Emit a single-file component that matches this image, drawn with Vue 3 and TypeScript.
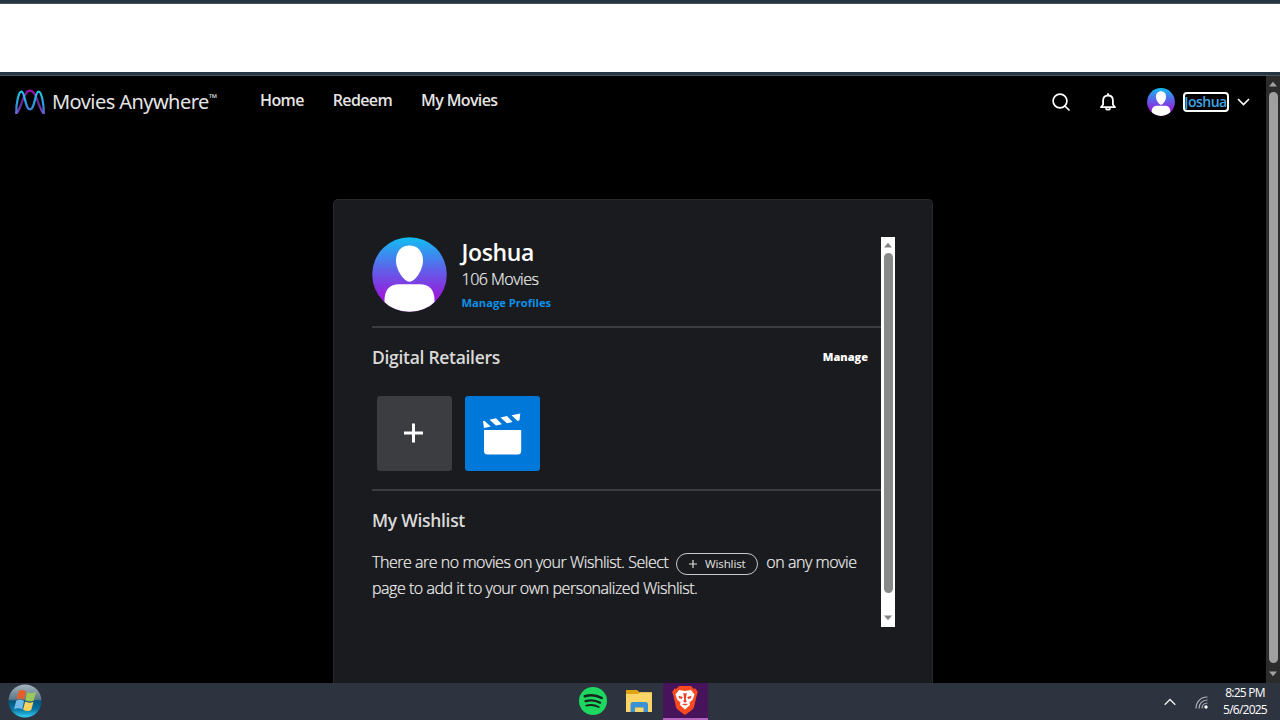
<script setup lang="ts">
import { ref } from 'vue';

type NavItem = {
    label: string,
    className: string
};

const navItems: NavItem[] = [
    { label: 'Home', className: 'nav-home' },
    { label: 'Redeem', className: 'nav-redeem' },
    { label: 'My Movies', className: 'nav-movies' }
];

const profile = ref({
    name: 'Joshua',
    movies: 106
});
</script>

<template>
    <div class="desktop">
        <div class="window-edge"></div>
        <div class="browser-bar"></div>
        <div class="window-edge"></div>
        <div class="viewport">
            <div class="page">
                <header class="header">
                    <div class="brand">
                        <svg class="brand-mark" width="32" height="27" viewBox="0 0 32 27" fill="none">
                            <defs>
                                <linearGradient id="markCyan" x1="0" y1="0" x2="0" y2="27" gradientUnits="userSpaceOnUse">
                                    <stop offset="0.1" stop-color="#25c8ef" />
                                    <stop offset="0.55" stop-color="#239ddb" />
                                    <stop offset="1" stop-color="#7a55cf" />
                                </linearGradient>
                                <linearGradient id="markPurple" x1="0" y1="0" x2="0" y2="27" gradientUnits="userSpaceOnUse">
                                    <stop offset="0" stop-color="#a00fae" />
                                    <stop offset="0.5" stop-color="#6b2394" />
                                    <stop offset="1" stop-color="#7a58d2" />
                                </linearGradient>
                            </defs>
                            <path d="M2.200 24.500C5.500 21.500 7 15 9.500 9C11.500 4 13 1.700 16 1.700S20.500 4 22.500 9C25 15 26.500 21.500 29.800 24.500" stroke="url(#markPurple)" stroke-width="2.200" />
                            <path d="M2.200 25C2 15 4.500 2.500 7.500 2.500C11 2.500 11 20.300 16 20.300S21 2.500 24.500 2.500C27.500 2.500 30 15 29.800 25" stroke="url(#markCyan)" stroke-width="2.200" />
                        </svg>
                        <span class="brand-name">Movies Anywhere</span>
                        <span class="brand-tm">™</span>
                    </div>
                    <nav class="nav">
                        <a v-for="item in navItems" :key="item.label" :class="item.className">{{ item.label }}</a>
                    </nav>
                    <div class="tools">
                        <svg class="search" width="20" height="20" viewBox="0 0 20 20" fill="none" stroke="#fff" stroke-width="1.700">
                            <circle cx="9" cy="9" r="6.900" />
                            <path d="M13.900 14L18 18" stroke-linecap="round" />
                        </svg>
                        <svg class="bell" width="16" height="20" viewBox="0 0 16 20" fill="none" stroke="#fff" stroke-width="1.800">
                            <path d="M1 15.200H15L12.900 12.500V8.500C12.900 5.200 11 3.500 8 3.500S3.100 5.200 3.100 8.500V12.500Z" stroke-linejoin="round" />
                            <path d="M8 3.200V1.200" />
                            <path d="M5.800 16.200C6.200 18.200 9.800 18.200 10.200 16.200" />
                        </svg>
                        <svg class="avatar" width="28" height="28" viewBox="0 0 75 75">
                            <use href="#avatarArt" />
                        </svg>
                        <span class="user-name">{{ profile.name }}</span>
                        <svg width="13" height="8" viewBox="0 0 13 8" fill="none" stroke="#fff" stroke-width="1.600">
                            <path d="M1 1L6.500 6.500L12 1" />
                        </svg>
                    </div>
                </header>
                <main class="card">
                    <div class="scroller">
                        <div class="content">
                            <section class="profile">
                                <svg width="75" height="75" viewBox="0 0 75 75">
                                    <defs>
                                        <linearGradient id="avatarBg" x1="0" y1="0" x2="0" y2="1">
                                            <stop offset="0" stop-color="#10bff3" />
                                            <stop offset="0.45" stop-color="#615ee9" />
                                            <stop offset="0.8" stop-color="#9a1bdc" />
                                        </linearGradient>
                                        <clipPath id="avatarClip">
                                            <circle cx="37.500" cy="37.500" r="37.300" />
                                        </clipPath>
                                    </defs>
                                    <g id="avatarArt" clip-path="url(#avatarClip)">
                                        <rect width="75" height="75" fill="url(#avatarBg)" />
                                        <path d="M37.500 8.500C45.500 8.500 51 14.500 51 23.500C51 33 43 44.700 37.500 44.700S24 33 24 23.500C24 14.500 29.500 8.500 37.500 8.500Z" fill="#fff" />
                                        <path d="M12.500 75V63C12.500 53 18 47.300 27 47.300H48C57 47.300 62.500 53 62.500 63V75Z" fill="#fff" />
                                    </g>
                                </svg>
                                <div class="profile-info">
                                    <h1>{{ profile.name }}</h1>
                                    <p>{{ profile.movies }} Movies</p>
                                    <a>Manage Profiles</a>
                                </div>
                            </section>
                            <section class="retailers">
                                <div class="section-head">
                                    <h2>Digital Retailers</h2>
                                    <a class="manage">Manage</a>
                                </div>
                                <div class="tiles">
                                    <div class="tile">
                                        <svg width="20" height="20" viewBox="0 0 20 20" stroke="#fff" stroke-width="3">
                                            <path d="M9.500 0.500V19.500M0 10H19" />
                                        </svg>
                                    </div>
                                    <div class="tile tile-blue">
                                        <svg width="75" height="75" viewBox="0 0 75 75" fill="#fff">
                                            <path d="M19 34H56.200V55Q56.200 58.500 52.700 58.500H22.500Q19 58.500 19 55Z" />
                                            <path d="M18 25.300L19.300 24.700L25.800 30.500L19 32ZM24.500 23.800L31 22.300L37 28.200L31 29.500ZM35.500 21.500L42 20L47.500 26L42 27.200ZM46.500 19.200L55.300 17.600L54.500 24.300L52.500 24.900Z" />
                                        </svg>
                                    </div>
                                </div>
                            </section>
                            <section class="wishlist">
                                <h2 class="wishlist-title">My Wishlist</h2>
                                <p>
                                    <span class="line-start">There are no movies on your Wishlist. Select</span>
                                    <span class="pill">
                                        <svg width="8" height="8" viewBox="0 0 8 8" stroke="#ddd" stroke-width="1.200">
                                            <path d="M4 0V8M0 4H8" />
                                        </svg>
                                        <span>Wishlist</span>
                                    </span>
                                    <span class="line-end">on any movie</span>
                                </p>
                                <p class="line-two">page to add it to your own personalized Wishlist.</p>
                            </section>
                        </div>
                        <div class="scrollbar">
                            <svg width="10" height="6" viewBox="0 0 10 6"><path d="M1 5.500L5 0.800L9 5.500Z" /></svg>
                            <div class="thumb"></div>
                            <svg width="10" height="6" viewBox="0 0 10 6"><path d="M1 0.500L5 5.200L9 0.500Z" /></svg>
                        </div>
                    </div>
                </main>
            </div>
            <div class="scrollbar page-scrollbar">
                <svg width="10" height="6" viewBox="0 0 10 6"><path d="M1 5.500L5 0.800L9 5.500Z" /></svg>
                <div class="thumb"></div>
                <svg width="10" height="6" viewBox="0 0 10 6"><path d="M1 0.500L5 5.200L9 0.500Z" /></svg>
            </div>
        </div>
        <footer class="taskbar">
            <svg class="start" width="34" height="34" viewBox="0 0 34 34">
                <defs>
                    <linearGradient id="orb" x1="0" y1="0" x2="0" y2="1">
                        <stop offset="0" stop-color="#a6b5bf" />
                        <stop offset="0.450" stop-color="#587888" />
                        <stop offset="0.500" stop-color="#05547d" />
                        <stop offset="0.750" stop-color="#0875a5" />
                        <stop offset="1" stop-color="#35d2f3" />
                    </linearGradient>
                </defs>
                <circle cx="17" cy="17" r="16.500" fill="url(#orb)" />
                <path d="M10.500 7.200C13 5.300 15.500 5.800 18 7.300L16.200 15.700C13.500 14.200 11 14.200 8.500 15.500Z" fill="#e3602c" />
                <path d="M19.200 7.900C22 9.500 24.500 9.500 28 8L25.800 16.500C23 18 20 17.500 17.400 16.200Z" fill="#9bc858" />
                <path d="M8.200 16.800C11 15.300 13.500 15.500 16 17L14.300 25.300C11.500 23.800 9 23.800 6 25.200Z" fill="#72bcea" />
                <path d="M17.100 17.500C20 19 22.500 19 25.500 17.700L23.200 26.100C20.500 27.500 18 27.200 15.100 25.800Z" fill="#f9d15b" />
            </svg>
            <div class="apps">
                <div class="app">
                    <svg width="28" height="28" viewBox="0 0 28 28" fill="none" stroke="#17251d" stroke-linecap="round">
                        <circle cx="14" cy="14" r="14" fill="#1ed760" stroke="none" />
                        <path d="M5.800 9.200C11.500 7.600 18 8.200 22.700 11" stroke-width="2.600" />
                        <path d="M6.500 14.100C11.500 12.700 17 13.300 21.200 15.700" stroke-width="2.200" />
                        <path d="M7.200 18.600C11.500 17.500 16 18 19.700 20" stroke-width="1.800" />
                    </svg>
                </div>
                <div class="app">
                    <svg width="28" height="24" viewBox="0 0 28 24">
                        <path d="M1 1H12L15 3.500H27V10H1Z" fill="#dfa315" />
                        <path d="M1 5H13L15.500 3.200H27V23H1Z" fill="#fbd568" />
                        <path d="M5.500 23V15.500Q5.500 13 8 13H20.500Q23 13 23 15.500V23H18.500V18.500H10V23Z" fill="#3a91d4" />
                    </svg>
                </div>
                <div class="app app-active">
                    <svg width="26" height="30" viewBox="0 0 26 30">
                        <path d="M7 1H19L21.500 3.800L23.500 3.500L25.800 7L24.800 10L22 22Q21.500 24 19.500 25.300L13 30L6.500 25.300Q4.500 24 4 22L1.200 10L0.200 7L2.500 3.500L4.500 3.800Z" fill="#fb4a20" />
                        <path d="M7 5L13 6L19 5L22.500 9.500L20.800 14.500L17.500 17.500L18 20L13 24.500L8 20L8.500 17.500L5.200 14.500L3.500 9.500Z" fill="#fff" />
                        <path d="M6.500 10.800L10.800 12L9.800 14L7.200 13.200ZM19.500 10.800L15.200 12L16.200 14L18.800 13.200ZM11.200 8L13 8.600L14.800 8L13.800 14L14.600 16.500L13 17.800L11.400 16.500L12.200 14ZM9.500 19L13 18.700L16.500 19L13 20.600Z" fill="#e93d25" />
                    </svg>
                </div>
            </div>
            <div class="tray">
                <svg width="12" height="8" viewBox="0 0 12 8" fill="none" stroke="#eee" stroke-width="1.400">
                    <path d="M0.700 6.700L6 1.500L11.300 6.700" />
                </svg>
                <svg class="wifi" width="13" height="13" viewBox="0 0 13 13" fill="none" stroke="#aeb2b9" stroke-width="1.200">
                    <path d="M1 12.500C1 6 5.500 1 12.500 1" />
                    <path d="M4 12.500C4 7.500 7.500 4 12.500 4" />
                    <path d="M7 12.500C7 9.500 9 7 12.500 7" />
                    <circle cx="11" cy="11" r="1.700" fill="#fff" stroke="none" />
                </svg>
                <div class="clock">
                    <span class="time">8:25 PM</span>
                    <span class="date">5/6/2025</span>
                </div>
            </div>
        </footer>
    </div>
</template>

<style>
body{
    margin: 0;
    overflow: hidden;
}
</style>

<style scoped>
.desktop{
    width: 1280px;
    height: 720px;
    display: flex;
    flex-direction: column;
    background: #000;
    font-family: "Open Sans", "Noto Sans", sans-serif;
    color: #e4e4e4;
    overflow: hidden;
}
.desktop *{
    box-sizing: border-box;
}
svg{
    display: block;
    flex: none;
}
h1, h2, p{
    margin: 0;
}
span, a{
    white-space: nowrap;
}
.window-edge{
    height: 4px;
    flex: none;
    background: #263541;
    border-bottom: 1px solid #45545d;
}
.browser-bar{
    height: 68px;
    flex: none;
    background: #fff;
}
.viewport{
    height: 607px;
    flex: none;
    display: flex;
}
.page{
    width: 1266px;
    display: flex;
    flex-direction: column;
    align-items: center;
    overflow: hidden;
}
.header{
    width: 100%;
    height: 52px;
    flex: none;
    padding: 0 16px 0 14px;
    display: flex;
    align-items: center;
}
.brand{
    width: 246px;
    display: flex;
    align-items: center;
}
.brand-mark{
    margin-right: 6px;
}
.brand-name{
    font-family: "Noto Sans", sans-serif;
    font-size: 20px;
    line-height: 28px;
    letter-spacing: -0.56px;
}
.brand-tm{
    font-size: 11px;
    line-height: 20px;
    align-self: flex-start;
}
.nav{
    display: flex;
    gap: 29px;
    font-size: 16px;
    font-weight: 600;
    line-height: 24px;
    letter-spacing: -0.63px;
    margin-top: -4px;
}
.tools{
    margin-left: auto;
    display: flex;
    align-items: center;
}
.search{
    margin-right: 29px;
}
.bell{
    margin-right: 31px;
}
.avatar{
    margin-right: 8px;
}
.user-name{
    width: 46px;
    height: 20px;
    margin-right: 8.5px;
    border: 2px solid #fff;
    border-radius: 4px;
    color: #43a4e4;
    font-size: 14px;
    font-weight: 600;
    line-height: 16px;
    letter-spacing: -0.5px;
    display: flex;
    justify-content: center;
    overflow: hidden;
}
.card{
    width: 600px;
    flex: 1;
    margin-top: 71px;
    padding: 37px 37px 0 38px;
    border: 1px solid #27292c;
    border-bottom: none;
    border-radius: 5px 5px 0 0;
    background: #1a1b1e;
}
.scroller{
    height: 390px;
    display: flex;
}
.content{
    width: 509px;
}
.profile{
    height: 91px;
    display: flex;
    gap: 14.5px;
    border-bottom: 2px solid #3c3d40;
}
.profile-info h1{
    color: #fff;
    font-size: 23px;
    font-weight: 600;
    line-height: 30px;
    letter-spacing: -0.35px;
}
.profile-info p{
    color: #f0f0f0;
    font-size: 16px;
    font-weight: 300;
    line-height: 24px;
    letter-spacing: -0.5px;
    -webkit-text-stroke: 0.2px #f0f0f0;
}
.profile-info a{
    display: block;
    color: #0e91e8;
    font-size: 11.2px;
    font-weight: 700;
    line-height: 23px;
}
.retailers{
    height: 163px;
    padding-top: 16px;
    border-bottom: 2px solid #3c3d40;
}
.section-head{
    height: 25px;
    padding-right: 13px;
    display: flex;
    align-items: center;
    justify-content: space-between;
}
h2{
    color: #dadada;
    font-size: 17.5px;
    font-weight: 600;
    line-height: 26px;
    letter-spacing: -0.3px;
}
.manage{
    color: #fff;
    font-size: 11px;
    font-weight: 800;
}
.tiles{
    display: flex;
    gap: 13px;
    padding: 26.5px 0 0 4.7px;
}
.tile{
    width: 75px;
    height: 75px;
    border-radius: 3px;
    display: flex;
    align-items: center;
    justify-content: center;
    background: #3c3d40;
}
.tile-blue{
    background: #0078da;
}
.wishlist{
    padding-top: 16px;
}
.wishlist p{
    height: 26px;
    display: flex;
    align-items: center;
    color: #f0f0f0;
    font-size: 16px;
    line-height: 26px;
    font-weight: 300;
    letter-spacing: -0.46px;
    white-space: nowrap;
    -webkit-text-stroke: 0.2px #f0f0f0;
}
.wishlist-title{
    margin-bottom: 16px;
}
.pill{
    width: 82px;
    height: 22px;
    flex: none;
    margin: 3px 8px 0;
    border: 1px solid #c8c8c8;
    border-radius: 11px;
    display: flex;
    align-items: center;
    justify-content: center;
    gap: 8px;
    color: #e4e4e4;
    font-size: 11.5px;
    font-weight: 400;
    line-height: 20px;
    letter-spacing: -0.1px;
    -webkit-text-stroke: 0;
}
.scrollbar{
    width: 14px;
    display: flex;
    flex-direction: column;
    align-items: center;
    gap: 5px;
    padding: 5px 0 6px;
    background: #fff;
    fill: #858585;
}
.thumb{
    width: 9px;
    height: 340px;
    margin-bottom: auto;
    border-radius: 5px;
    background: #888989;
}
.page-scrollbar{
    background: #2c2c2c;
    fill: #a1a1a1;
}
.page-scrollbar .thumb{
    height: 571px;
    background: #9f9f9f;
}
.taskbar{
    height: 37px;
    flex: none;
    display: flex;
    align-items: center;
    background: #2d333f;
}
.start{
    margin: 0 0 1px 8px;
}
.apps{
    height: 37px;
    margin-left: 528.5px;
    display: flex;
    gap: 1px;
}
.app{
    width: 45px;
    padding-bottom: 1px;
    display: flex;
    align-items: center;
    justify-content: center;
}
.app-active{
    background: #47145c;
    border-bottom: 2px solid #b363bd;
}
.tray{
    margin-left: auto;
    padding-right: 13px;
    display: flex;
    align-items: center;
}
.wifi{
    margin: 2px 15px 0 19px;
}
.clock{
    width: 44px;
    padding-bottom: 2px;
    display: flex;
    flex-direction: column;
    align-items: center;
    color: #fff;
    font-size: 12px;
    line-height: 17px;
    letter-spacing: -0.75px;
}
</style>
